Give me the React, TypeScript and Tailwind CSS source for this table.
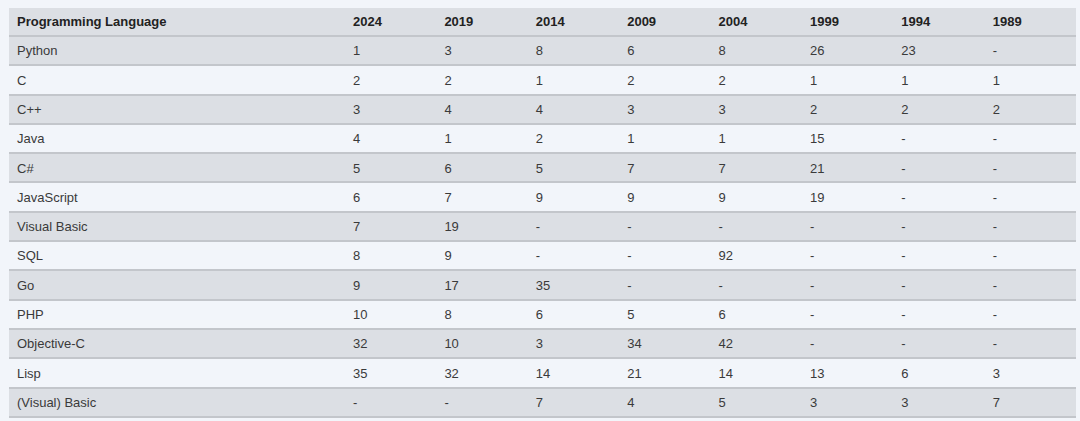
const years = ["2024", "2019", "2014", "2009", "2004", "1999", "1994", "1989"];

const rows: [string, string[]][] = [
  ["Python", ["1", "3", "8", "6", "8", "26", "23", "-"]],
  ["C", ["2", "2", "1", "2", "2", "1", "1", "1"]],
  ["C++", ["3", "4", "4", "3", "3", "2", "2", "2"]],
  ["Java", ["4", "1", "2", "1", "1", "15", "-", "-"]],
  ["C#", ["5", "6", "5", "7", "7", "21", "-", "-"]],
  ["JavaScript", ["6", "7", "9", "9", "9", "19", "-", "-"]],
  ["Visual Basic", ["7", "19", "-", "-", "-", "-", "-", "-"]],
  ["SQL", ["8", "9", "-", "-", "92", "-", "-", "-"]],
  ["Go", ["9", "17", "35", "-", "-", "-", "-", "-"]],
  ["PHP", ["10", "8", "6", "5", "6", "-", "-", "-"]],
  ["Objective-C", ["32", "10", "3", "34", "42", "-", "-", "-"]],
  ["Lisp", ["35", "32", "14", "21", "14", "13", "6", "3"]],
  ["(Visual) Basic", ["-", "-", "7", "4", "5", "3", "3", "7"]],
];

const cols = "grid grid-cols-[336px_repeat(8,91.4px)]";

export default function App() {
  return (
    <div className="min-h-screen bg-[#f2f5fa] pl-[9px] pt-[8px] font-['Liberation_Sans',Arial,sans-serif] text-[13px] text-[#3a3a3a]">
      {/* header */}
      <div className={`${cols} w-max h-[29px] items-center bg-[#dcdfe4] border-b-2 border-[#c3c6cb] font-bold text-[#222]`}>
        <div className="pl-2">Programming Language</div>
        {years.map(y => (
          <div key={y} className="pl-2">{y}</div>
        ))}
      </div>

      {rows.map(([name, vals], i) => (
        <div
          key={name}
          className={`${cols} w-max h-[29.3px] items-center pt-px border-b-2 border-[#c3c6cb] ${
            i % 2 === 0 ? "bg-[#dcdfe4]" : "bg-[#f2f5fa]"
          }`}
        >
          <div className="pl-2">{name}</div>
          {vals.map((v, j) => (
            <div key={j} className="pl-2">{v}</div>
          ))}
        </div>
      ))}
    </div>
  );
}
